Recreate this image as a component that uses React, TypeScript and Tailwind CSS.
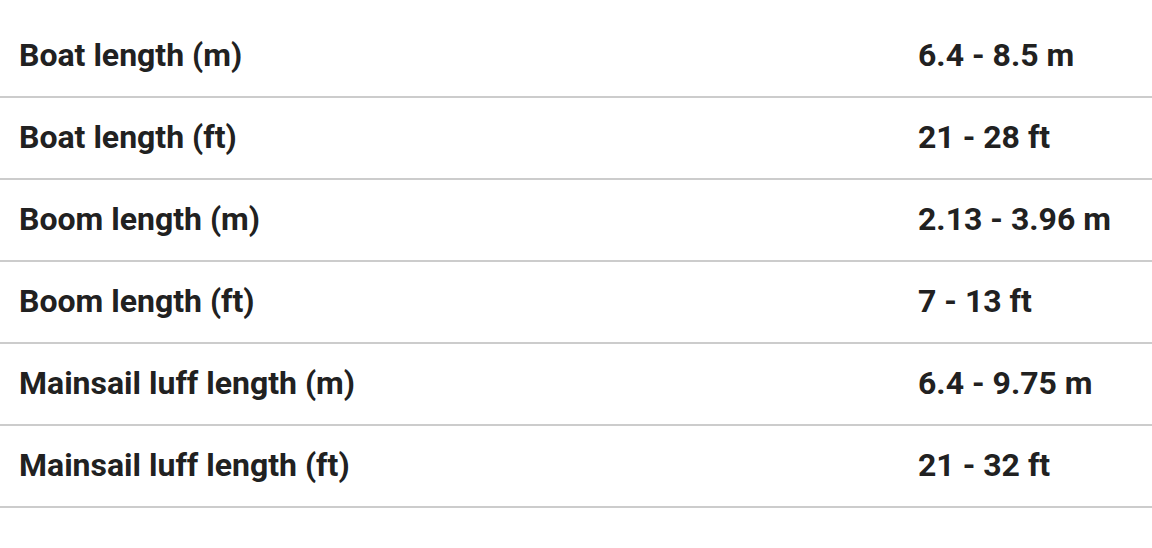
const rows = [
  { label: "Boat length (m)", value: "6.4 - 8.5 m" },
  { label: "Boat length (ft)", value: "21 - 28 ft" },
  { label: "Boom length (m)", value: "2.13 - 3.96 m" },
  { label: "Boom length (ft)", value: "7 - 13 ft" },
  { label: "Mainsail luff length (m)", value: "6.4 - 9.75 m" },
  { label: "Mainsail luff length (ft)", value: "21 - 32 ft" },
];

export default function App() {
  return (
    <div className="bg-white w-[1152px] h-[548px] pt-4 font-['Roboto',sans-serif] text-[#212121] font-bold text-[32px]">
      {rows.map((row, i) => (
        <div key={i} className="flex items-center h-[82px] pb-[2px] border-b-2 border-[#cccccc]">
          <div className="w-[918px] pl-[19px]">{row.label}</div>
          <div>{row.value}</div>
        </div>
      ))}
    </div>
  );
}
